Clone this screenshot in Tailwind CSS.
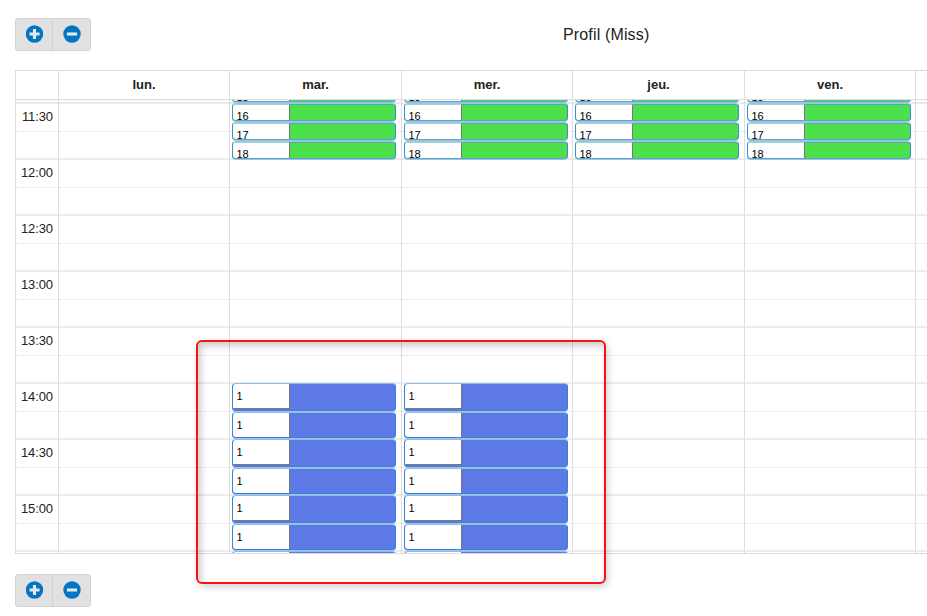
<!DOCTYPE html>
<html lang="fr">
<head>
<meta charset="utf-8">
<title>Profil (Miss)</title>
<script src="https://cdn.jsdelivr.net/npm/@tailwindcss/browser@4"></script>
</head>
<body class="bg-white text-[#222] font-['Liberation_Sans',Arial,sans-serif] w-[927px] h-[616px] overflow-hidden relative">
<template id="zoom-buttons">
  <div class="flex w-[76px] h-[33px] rounded-[3px] border border-[#d3d3d3] bg-[#e1e1e1]">
    <button class="w-[37px] border-r border-[#d0d0d0] flex items-center justify-center pl-px pb-px"><svg class="w-[18px] h-[18px]" viewBox="0 0 18 18"><circle cx="8.5" cy="9" r="8.7" fill="#0275c4"/><path d="M8.5 4v10M3.5 9h10" stroke="#e8e8e8" stroke-width="3.1"/></svg></button>
    <button class="w-[37px] flex items-center justify-center pl-px pb-px"><svg class="w-[18px] h-[18px]" viewBox="0 0 18 18"><circle cx="9" cy="9" r="8.7" fill="#0275c4"/><path d="M3.9 9h10.2" stroke="#e8e8e8" stroke-width="3.1"/></svg></button>
  </div>
</template>
<header class="flex pt-[18px] pl-[15px] h-[70px]">
  <div data-zoom></div>
  <h1 class="ml-[472px] mt-[5px] text-[16px] leading-6 tracking-[0.15px] whitespace-nowrap">Profil (Miss)</h1>
</header>
<main class="ml-[15px] w-[912px] h-[484px] border-t border-b border-[#ddd] overflow-hidden">
  <div id="head" class="grid grid-cols-[43px_171px_172px_171px_172px_171px_12px] h-[29px] border-b border-[#ddd] text-[13px] font-bold leading-[28px] text-center"></div>
  <div id="body" class="grid grid-cols-[43px_171px_172px_171px_172px_171px_12px] h-[453px] overflow-hidden"></div>
</main>
<footer class="pt-[20px] pl-[15px]"><div data-zoom></div></footer>
<div class="absolute left-[196px] top-[340px] w-[410px] h-[244px] rounded-[6px] border-2 border-[#ff1010] shadow-[2px_3px_7px_rgba(0,0,0,0.18),inset_3px_4px_7px_rgba(0,0,0,0.2)]"></div>
<script>
document.querySelectorAll('[data-zoom]').forEach(e => e.append(document.getElementById('zoom-buttons').content.cloneNode(true)));
const days = ['', 'lun.', 'mar.', 'mer.', 'jeu.', 'ven.', ''];
const times = ['11:30', '12:00', '12:30', '13:00', '13:30', '14:00', '14:30', '15:00', ''];
document.getElementById('head').innerHTML = days.map(d => `<div class="border-l border-[#ddd]">${d}</div>`).join('');

const slots = labels => times.map(t =>
  `<div class="h-[29px] border-t-2 border-[#ebebeb] text-[13px] leading-[25px] text-right tracking-[-0.1px] pr-[5px]">${labels ? t : ''}</div><div class="h-[27px] border-t border-dotted border-[#ddd]"></div>`).join('');

const green = [['15', 84], ['16', 103], ['17', 122], ['18', 141]];
const blue = [[383, 28], [412, 26], [439, 28], [468, 26], [495, 28], [524, 26], [551, 28]];
const greenEvents = green.map(([n, y]) =>
  `<div class="absolute left-[2px] w-[164px] h-[18px] rounded-[4px] border border-[#3a8fd0] border-t-[#9fc3e8] border-b-[#5aa8c8] bg-[#4ce04c] shadow-[0_1px_0_#9fc3e8,inset_0_1px_0_#48b0a4] overflow-hidden flex" style="top:${y - 100}px"><div class="w-[57px] bg-white border-r border-t border-r-[#777] border-t-[#a6d4cc] text-black text-[11px] leading-[13px] pl-[3.5px] pt-[5px]">${n}</div></div>`).join('');
const blueEvents = blue.map(([y, h]) =>
  `<div class="absolute left-[2px] w-[164px] rounded-[4px] border border-[#3a80d8] border-t-[#94bbe8] bg-[#5c79e6] shadow-[0_1px_0_#9fc6e8] overflow-hidden flex items-start" style="top:${y - 100}px;height:${h}px"><div class="w-[57px] h-[25px] bg-white border-r border-b border-[#777] text-black text-[11px] leading-[13px] pl-[3.5px] pt-[6px]">${y < 551 ? '1' : ''}</div></div>`).join('');

document.getElementById('body').innerHTML = days.map((d, i) =>
  `<div class="relative border-l border-[#ddd] pt-[2px]">${slots(i === 0)}${i >= 2 && i <= 5 ? greenEvents : ''}${i === 2 || i === 3 ? blueEvents : ''}</div>`).join('');
</script>
</body>
</html>
